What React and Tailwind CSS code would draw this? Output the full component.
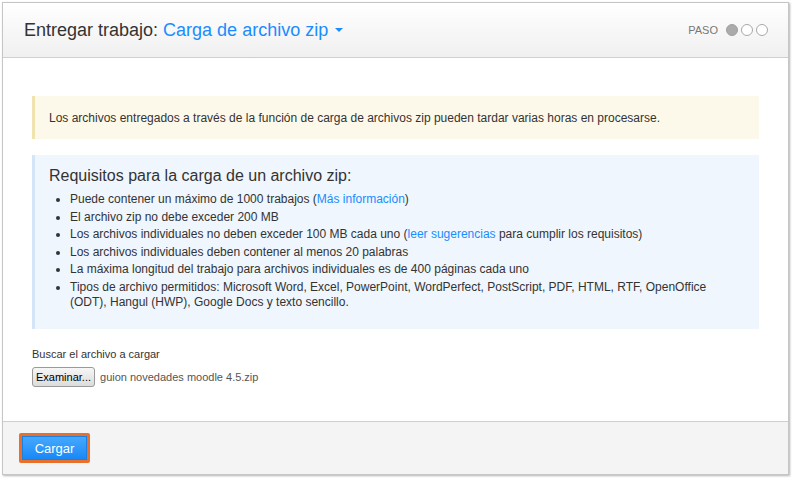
import React from 'react';

const requisitos = [
  <>Puede contener un máximo de 1000 trabajos (<a className="text-[#1a8cff]">Más información</a>)</>,
  <>El archivo zip no debe exceder 200 MB</>,
  <>Los archivos individuales no deben exceder 100 MB cada uno (<a className="text-[#1a8cff]">leer sugerencias</a> para cumplir los requisitos)</>,
  <>Los archivos individuales deben contener al menos 20 palabras</>,
  <>La máxima longitud del trabajo para archivos individuales es de 400 páginas cada uno</>,
  <>Tipos de archivo permitidos: Microsoft Word, Excel, PowerPoint, WordPerfect, PostScript, PDF, HTML, RTF, OpenOffice (ODT), Hangul (HWP), Google Docs y texto sencillo.</>,
];

const Paso = () => (
  <div className="flex items-center gap-[3px] text-[11px] text-[#777]">
    <span className="mr-[5px]">PASO</span>
    <span className="w-[12px] h-[12px] rounded-full bg-[#ababab] border border-[#a0a0a0]" />
    <span className="w-[12px] h-[12px] rounded-full bg-white border border-[#a8a8a8]" />
    <span className="w-[12px] h-[12px] rounded-full bg-white border border-[#a8a8a8]" />
  </div>
);

export default function App() {
  return (
    <div className="w-[793px] h-[478px] bg-white p-[2px]" style={{ fontFamily: '"Liberation Sans", Arial, sans-serif' }}>
      <div className="w-[787px] h-[473px] flex flex-col border border-[#c6c6c6] shadow-[1px_1px_2px_rgba(0,0,0,0.3)]">
        {/* cabecera */}
        <div className="h-[55px] flex items-center justify-between pl-[21px] pr-[20px] border-b border-[#cfcfcf] bg-gradient-to-b from-white to-[#f0f0f0]">
          <h2 className="text-[18px] text-[#333] flex items-center">
            Entregar trabajo:
            <span className="text-[#1a8cff] ml-[5px]">Carga de archivo zip</span>
            <span className="ml-[7px] w-0 h-0 border-l-[4px] border-r-[4px] border-t-[4px] border-l-transparent border-r-transparent border-t-[#1a8cff]" />
          </h2>
          <Paso />
        </div>

        {/* cuerpo */}
        <div className="flex-1 px-[29px] pt-[38px] text-[12px] text-[#333]">
          <div className="h-[43px] flex items-center bg-[#fdf9ea] border-l-[3px] border-[#efe4b0] pl-[14px]">
            Los archivos entregados a través de la función de carga de archivos zip pueden tardar varias horas en procesarse.
          </div>

          <div className="mt-[16px] h-[174px] bg-[#eff6fd] border-l-[3px] border-[#d3e5f7] pl-[14px] pt-[11px]">
            <h3 className="text-[16px] text-[#333] leading-[20px]">Requisitos para la carga de un archivo zip:</h3>
            <ul className="mt-[6px] pl-[21px] pr-[30px] list-disc flex flex-col gap-[2.6px]">
              {requisitos.map((r, i) => (
                <li key={i} className="leading-[15px]">{r}</li>
              ))}
            </ul>
          </div>

          <div className="mt-[19px] text-[11px]">
            <div className="leading-[13px]">Buscar el archivo a cargar</div>
            <div className="mt-[6px] flex items-center gap-[5px]">
              <button className="h-[20px] px-[3px] text-[11px] text-black rounded-[3px] border border-[#9a9a9a] bg-gradient-to-b from-[#f6f6f6] to-[#dcdcdc]">
                Examinar...
              </button>
              <span className="text-[#555]">guion novedades moodle 4.5.zip</span>
            </div>
          </div>
        </div>

        {/* pie */}
        <div className="h-[53px] bg-[#f4f4f4] border-t border-[#cfcfcf] flex items-center pl-[16px]">
          <div className="border-[3px] border-[#e8702a] rounded-[2px]">
            <button className="w-[65px] h-[24px] text-[13px] text-white bg-gradient-to-b from-[#44a9ff] to-[#1688f5] border border-[#1d7fe0]">
              Cargar
            </button>
          </div>
        </div>
      </div>
    </div>
  );
}
